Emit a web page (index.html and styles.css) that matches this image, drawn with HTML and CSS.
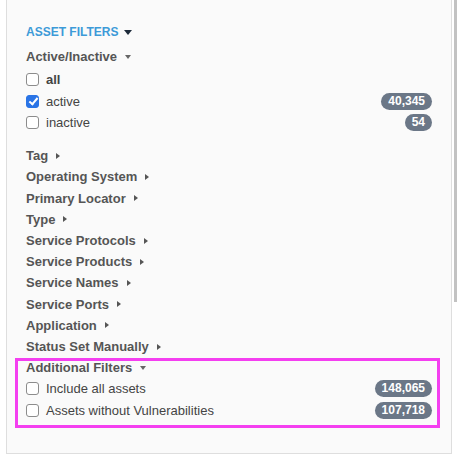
FILE: index.html
```html
<!DOCTYPE html>
<html lang="en">
<head>
    <meta charset="UTF-8">
    <meta name="viewport" content="width=device-width, initial-scale=1.0">
    <title>Asset Filters</title>
    <link rel="stylesheet" href="styles.css">
</head>
<body>
    <div class="scroll-thumb"></div>
    <aside class="filter-panel">
        <h2 class="panel-title">ASSET FILTERS <span class="caret-down dark"></span></h2>

        <div class="group">
            <div class="group-head first">Active/Inactive <span class="caret-down"></span></div>
            <label class="check-row">
                <input type="checkbox">
                <span class="check-label strong">all</span>
            </label>
            <label class="check-row">
                <input type="checkbox" checked>
                <span class="check-label">active</span>
                <span class="badge">40,345</span>
            </label>
            <label class="check-row">
                <input type="checkbox">
                <span class="check-label">inactive</span>
                <span class="badge">54</span>
            </label>
        </div>

        <div class="group collapsed-list">
            <div class="group-head">Tag <span class="caret-right"></span></div>
            <div class="group-head">Operating System <span class="caret-right"></span></div>
            <div class="group-head">Primary Locator <span class="caret-right"></span></div>
            <div class="group-head">Type <span class="caret-right"></span></div>
            <div class="group-head">Service Protocols <span class="caret-right"></span></div>
            <div class="group-head">Service Products <span class="caret-right"></span></div>
            <div class="group-head">Service Names <span class="caret-right"></span></div>
            <div class="group-head">Service Ports <span class="caret-right"></span></div>
            <div class="group-head">Application <span class="caret-right"></span></div>
            <div class="group-head">Status Set Manually <span class="caret-right"></span></div>
        </div>

        <div class="group extra">
            <div class="group-head">Additional Filters <span class="caret-down"></span></div>
            <label class="check-row">
                <input type="checkbox">
                <span class="check-label">Include all assets</span>
                <span class="badge">148,065</span>
            </label>
            <label class="check-row">
                <input type="checkbox">
                <span class="check-label">Assets without Vulnerabilities</span>
                <span class="badge">107,718</span>
            </label>
        </div>
    </aside>
</body>
</html>
```

FILE: styles.css
```css
* {
    margin: 0;
    padding: 0;
    box-sizing: border-box;
}

body {
    font-family: "Liberation Sans", Arial, sans-serif;
    font-size: 13px;
    color: #555;
    background: #fff;
    height: 456px;
    overflow: hidden;
}

/* fake scrollbar thumb on the far right */
.scroll-thumb {
    position: absolute;
    top: 0;
    right: 0;
    width: 3px;
    height: 302px;
    background: #c2c2c2;
}

.filter-panel {
    margin-left: 6px;
    width: 446px;
    height: 454px;
    background: #fafafa;
    border-left: 1px solid #dedede;
    border-right: 1px solid #dedede;
    border-bottom: 1px solid #dedede;
    padding: 22px 19px 0 19px;
}

.panel-title {
    font-size: 12px;
    font-weight: bold;
    color: #3d9ad8;
    line-height: 20px;
    display: flex;
    align-items: center;
    margin-bottom: 4px;
}

.group-head {
    font-weight: bold;
    color: #555;
    line-height: 21.2px;
    display: flex;
    align-items: center;
}

.group-head.first {
    margin-bottom: 2px;
}

.caret-down {
    display: inline-block;
    width: 0;
    height: 0;
    margin-left: 8px;
    border-left: 3.5px solid transparent;
    border-right: 3.5px solid transparent;
    border-top: 4px solid #666;
}

.caret-down.dark {
    margin-left: 6px;
    border-left-width: 4.5px;
    border-right-width: 4.5px;
    border-top: 5px solid #1d2a3a;
}

.caret-right {
    display: inline-block;
    width: 0;
    height: 0;
    margin-left: 8px;
    border-top: 3px solid transparent;
    border-bottom: 3px solid transparent;
    border-left: 4px solid #555;
}

.check-row {
    display: flex;
    align-items: center;
    height: 21.3px;
    color: #444;
    cursor: pointer;
}

.check-row input {
    appearance: none;
    -webkit-appearance: none;
    width: 13px;
    height: 13px;
    border: 1px solid #8c8c8c;
    border-radius: 3px;
    background: #fff;
    margin-right: 7px;
    flex-shrink: 0;
    position: relative;
}

.check-row input:checked {
    background: #2a74e6;
    border-color: #2a74e6;
}

.check-row input:checked::after {
    content: '';
    position: absolute;
    left: 3.5px;
    top: 0.5px;
    width: 3px;
    height: 7px;
    border-right: 2px solid #fff;
    border-bottom: 2px solid #fff;
    transform: rotate(40deg);
}

.check-label {
    flex: 1;
}

.check-label.strong {
    font-weight: bold;
}

.badge {
    background: #6b7787;
    color: #fff;
    font-size: 12px;
    font-weight: bold;
    line-height: 17px;
    height: 17px;
    padding: 0 7px;
    border-radius: 9px;
}

.collapsed-list {
    margin-top: 12px;
}

.extra {
    position: relative;
}

/* pink highlight drawn around the additional filters */
.extra::after {
    content: '';
    position: absolute;
    top: 1px;
    left: -11px;
    right: -8px;
    bottom: -7px;
    border: 3px solid #f43ff0;
    pointer-events: none;
}
```
